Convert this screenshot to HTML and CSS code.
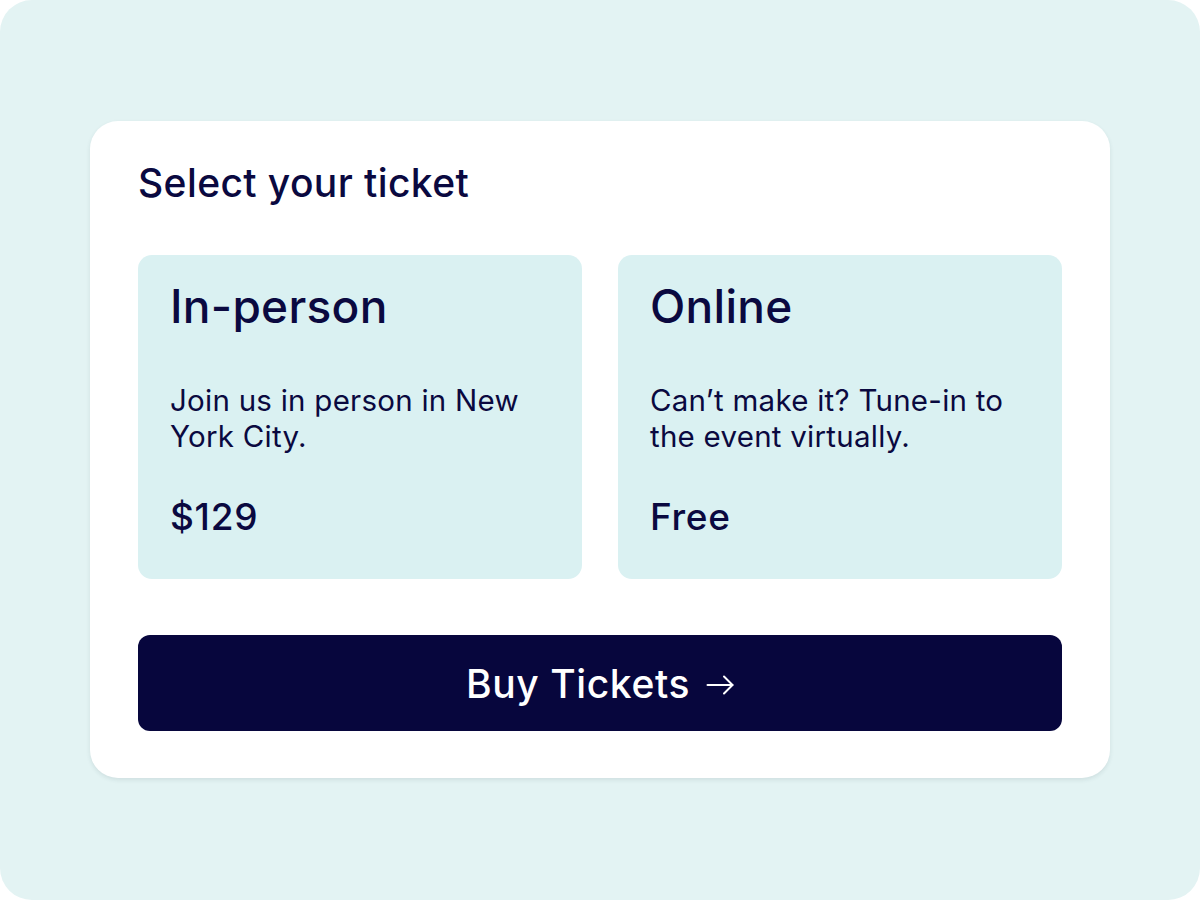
FILE: index.html
```html
<!DOCTYPE html>
<html lang="en">
<head>
<meta charset="utf-8">
<title>Select your ticket</title>
<link rel="stylesheet" href="styles.css">
</head>
<body>
<div class="frame">
  <section class="card">
    <h1 class="card-title">Select your ticket</h1>
    <div class="options">
      <div class="option">
        <h2 class="option-title">In-person</h2>
        <p class="option-desc">Join us in person in New York City.</p>
        <p class="option-price">$129</p>
      </div>
      <div class="option">
        <h2 class="option-title">Online</h2>
        <p class="option-desc">Can’t make it? Tune-in to the event virtually.</p>
        <p class="option-price">Free</p>
      </div>
    </div>
    <button class="buy" type="button">
      <span class="buy-label">Buy Tickets</span>
      <svg class="buy-arrow" width="28" height="20" viewBox="0 0 28 20" fill="none" stroke="currentColor" stroke-width="2" stroke-linecap="round" stroke-linejoin="round">
        <path d="M1.5 10H26.5"/>
        <path d="M18 1.5L26.5 10L18 18.5"/>
      </svg>
    </button>
  </section>
</div>
</body>
</html>
```
FILE: styles.css
```css
html, body {
  margin: 0;
  padding: 0;
  background: #ffffff;
}

body {
  font-family: Inter, "Noto Sans", "Liberation Sans", sans-serif;
  color: #0a0940;
}

.frame {
  width: 1200px;
  height: 900px;
  box-sizing: border-box;
  padding-top: 121px;
  background: #e3f3f3;
  border-radius: 32px;
  display: flex;
  align-items: flex-start;
  justify-content: center;
}

.card {
  width: 1020px;
  box-sizing: border-box;
  background: #ffffff;
  border-radius: 28px;
  padding: 40px 48px 47px;
  box-shadow: 0 2px 4px rgba(30, 60, 70, 0.10);
}

.card-title {
  margin: 0;
  font-size: 39px;
  line-height: 44px;
  font-weight: 500;
  letter-spacing: 0.4px;
}

.options {
  margin-top: 50px;
  display: grid;
  grid-template-columns: 1fr 1fr;
  gap: 36px;
}

.option {
  background: #daf1f2;
  border-radius: 14px;
  padding: 25px 32px 41px;
}

.option-title {
  margin: 0;
  font-size: 46px;
  line-height: 52px;
  font-weight: 500;
  letter-spacing: 0.3px;
}

.option-desc {
  margin: 50px 0 0;
  font-size: 29.5px;
  line-height: 36px;
  font-weight: 400;
  letter-spacing: 0.25px;
}

.option-price {
  margin: 42px 0 0;
  font-size: 37px;
  line-height: 42px;
  font-weight: 500;
  letter-spacing: 0.7px;
}

.buy {
  margin-top: 56px;
  width: 100%;
  height: 96px;
  border: none;
  border-radius: 12px;
  background: #07063d;
  color: #ffffff;
  font-family: inherit;
  font-size: 39px;
  font-weight: 500;
  letter-spacing: 0.6px;
  display: flex;
  align-items: center;
  justify-content: center;
  gap: 16px;
  cursor: pointer;
}

.buy-arrow {
  margin-top: 4px;
}
```
